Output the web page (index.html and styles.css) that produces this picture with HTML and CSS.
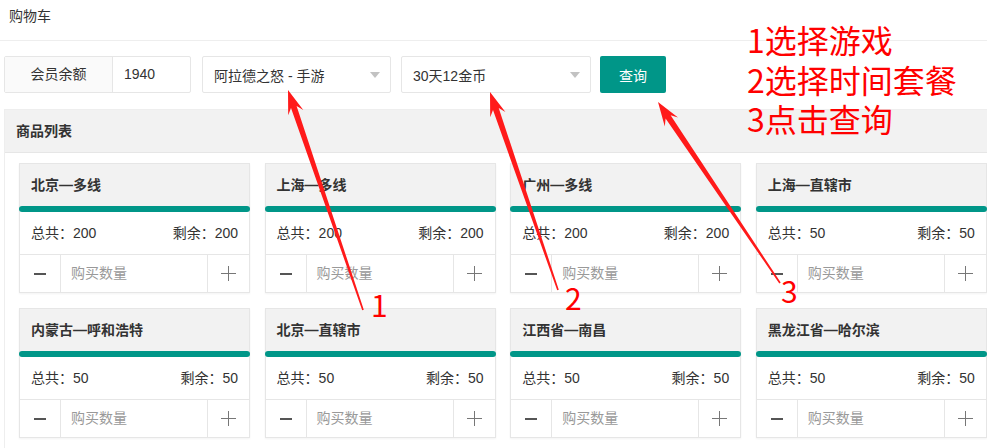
FILE: index.html
```html
<!DOCTYPE html>
<html lang="zh-CN">
<head>
    <meta charset="UTF-8">
    <meta name="viewport" content="width=device-width, initial-scale=1.0">
    <title>购物车</title>
    <link rel="stylesheet" href="styles.css">
</head>
<body>

<div class="page-title">购物车</div>

<div class="toolbar">
    <div class="balance">
        <span class="balance-label">会员余额</span>
        <span class="balance-value">1940</span>
    </div>
    <div class="select select-game">
        <span>阿拉德之怒 - 手游</span>
        <i class="caret"></i>
    </div>
    <div class="select select-plan">
        <span>30天12金币</span>
        <i class="caret"></i>
    </div>
    <button class="btn-query">查询</button>
</div>

<div class="panel">
    <div class="panel-header">商品列表</div>
    <div class="panel-body">
        <div class="card-grid">

            <div class="card">
                <div class="card-header">北京—多线</div>
                <div class="card-bar"></div>
                <div class="card-body"><span>总共：200</span><span>剩余：200</span></div>
                <div class="qty">
                    <span class="qty-btn"><i class="minus"></i></span>
                    <span class="qty-input">购买数量</span>
                    <span class="qty-btn plus-btn"><i class="plus"></i></span>
                </div>
            </div>

            <div class="card">
                <div class="card-header">上海—多线</div>
                <div class="card-bar"></div>
                <div class="card-body"><span>总共：200</span><span>剩余：200</span></div>
                <div class="qty">
                    <span class="qty-btn"><i class="minus"></i></span>
                    <span class="qty-input">购买数量</span>
                    <span class="qty-btn plus-btn"><i class="plus"></i></span>
                </div>
            </div>

            <div class="card">
                <div class="card-header">广州—多线</div>
                <div class="card-bar"></div>
                <div class="card-body"><span>总共：200</span><span>剩余：200</span></div>
                <div class="qty">
                    <span class="qty-btn"><i class="minus"></i></span>
                    <span class="qty-input">购买数量</span>
                    <span class="qty-btn plus-btn"><i class="plus"></i></span>
                </div>
            </div>

            <div class="card">
                <div class="card-header">上海—直辖市</div>
                <div class="card-bar"></div>
                <div class="card-body"><span>总共：50</span><span>剩余：50</span></div>
                <div class="qty">
                    <span class="qty-btn"><i class="minus"></i></span>
                    <span class="qty-input">购买数量</span>
                    <span class="qty-btn plus-btn"><i class="plus"></i></span>
                </div>
            </div>

            <div class="card">
                <div class="card-header">内蒙古—呼和浩特</div>
                <div class="card-bar"></div>
                <div class="card-body"><span>总共：50</span><span>剩余：50</span></div>
                <div class="qty">
                    <span class="qty-btn"><i class="minus"></i></span>
                    <span class="qty-input">购买数量</span>
                    <span class="qty-btn plus-btn"><i class="plus"></i></span>
                </div>
            </div>

            <div class="card">
                <div class="card-header">北京—直辖市</div>
                <div class="card-bar"></div>
                <div class="card-body"><span>总共：50</span><span>剩余：50</span></div>
                <div class="qty">
                    <span class="qty-btn"><i class="minus"></i></span>
                    <span class="qty-input">购买数量</span>
                    <span class="qty-btn plus-btn"><i class="plus"></i></span>
                </div>
            </div>

            <div class="card">
                <div class="card-header">江西省—南昌</div>
                <div class="card-bar"></div>
                <div class="card-body"><span>总共：50</span><span>剩余：50</span></div>
                <div class="qty">
                    <span class="qty-btn"><i class="minus"></i></span>
                    <span class="qty-input">购买数量</span>
                    <span class="qty-btn plus-btn"><i class="plus"></i></span>
                </div>
            </div>

            <div class="card">
                <div class="card-header">黑龙江省—哈尔滨</div>
                <div class="card-bar"></div>
                <div class="card-body"><span>总共：50</span><span>剩余：50</span></div>
                <div class="qty">
                    <span class="qty-btn"><i class="minus"></i></span>
                    <span class="qty-input">购买数量</span>
                    <span class="qty-btn plus-btn"><i class="plus"></i></span>
                </div>
            </div>

        </div>
    </div>
</div>

<!-- 标注：步骤说明和箭头 -->
<div class="note-steps">
    <p>1选择游戏</p>
    <p>2选择时间套餐</p>
    <p>3点击查询</p>
</div>

<svg class="note-arrows" width="987" height="448" viewBox="0 0 987 448">
    <polygon points="288,90 303.3,110.1 296.6,106.1 363.8,309.7 362.2,310.3 291,108 288.2,115.3"/>
    <polygon points="490,92 505.4,112.1 498.7,108 558.8,289.7 557.2,290.3 493,110 490.2,117.3"/>
    <polygon points="658,102 678,117.4 670.6,115.2 780.7,282.6 779.3,283.4 665.6,118.6 664.8,126.4"/>
</svg>
<span class="note-num num-1">1</span>
<span class="note-num num-2">2</span>
<span class="note-num num-3">3</span>

</body>
</html>
```

FILE: styles.css
```css
html, body {
    overflow: hidden;
}

body {
    margin: 0;
    padding: 0;
    position: relative;
    font-family: "Liberation Sans", "Noto Sans CJK SC", sans-serif;
    font-size: 14px;
    color: #333;
    background-color: #fff;
}

.page-title {
    height: 40px;
    line-height: 32px;
    padding-left: 9px;
    border-bottom: 1px solid #eee;
}

/* верхняя панель с фильтрами */
.toolbar {
    display: flex;
    align-items: stretch;
    height: 37px;
    padding: 15px 0 0 4px;
    margin-bottom: 16px;
}

.balance {
    display: flex;
    width: 187px;
    border: 1px solid #e6e6e6;
    border-radius: 2px;
    box-sizing: border-box;
    margin-right: 11px;
}

.balance-label {
    width: 107px;
    text-align: center;
    line-height: 35px;
    background-color: #fafafa;
    border-right: 1px solid #e6e6e6;
}

.balance-value {
    padding-left: 11px;
    line-height: 35px;
}

.select {
    display: flex;
    align-items: center;
    padding: 0 10px 0 11px;
    border: 1px solid #e6e6e6;
    border-radius: 2px;
    box-sizing: border-box;
}

.select span {
    flex-grow: 1;
}

.select-game {
    width: 189px;
    margin-right: 10px;
}

.select-plan {
    width: 190px;
    margin-right: 9px;
}

.caret {
    width: 0;
    height: 0;
    border-top: 6px solid #c2c2c2;
    border-left: 5px solid transparent;
    border-right: 5px solid transparent;
}

.btn-query {
    width: 66px;
    padding: 0;
    border: none;
    border-radius: 2px;
    background-color: #009688;
    color: #fff;
    font-family: inherit;
    font-size: 14px;
}

/* список товаров */
.panel {
    width: 1000px;
    margin-left: 4px;
    border: 1px solid #eee;
}

.panel-header {
    height: 42px;
    line-height: 42px;
    padding-left: 11px;
    background-color: #f2f2f2;
    border-bottom: 1px solid #e6e6e6;
    font-weight: bold;
}

.panel-body {
    padding: 10px 14px;
}

.card-grid {
    display: grid;
    grid-template-columns: repeat(4, 231px);
    column-gap: 14.6px;
    row-gap: 15px;
}

.card {
    border: 1px solid #e6e6e6;
    box-shadow: 0 1px 2px rgba(0, 0, 0, 0.05);
}

.card-header {
    height: 42px;
    line-height: 42px;
    padding: 0 11px;
    background-color: #f2f2f2;
    font-weight: bold;
}

.card-bar {
    height: 6px;
    margin: 0 -1px;
    border-radius: 3px;
    background-color: #009688;
}

.card-body {
    display: flex;
    justify-content: space-between;
    height: 42px;
    line-height: 42px;
    padding: 0 11px;
    border-bottom: 1px solid #e6e6e6;
}

.qty {
    display: flex;
    height: 37px;
}

.qty-btn {
    display: flex;
    align-items: center;
    justify-content: center;
    width: 40px;
    border-right: 1px solid #e6e6e6;
}

.qty-btn.plus-btn {
    width: 41px;
    border-right: none;
    border-left: 1px solid #e6e6e6;
}

.qty-input {
    flex-grow: 1;
    padding-left: 10px;
    line-height: 37px;
    color: #999;
}

.minus {
    width: 12px;
    height: 2px;
    background-color: #555;
}

.plus {
    position: relative;
    width: 15px;
    height: 15px;
}

.plus::before,
.plus::after {
    content: "";
    position: absolute;
    background-color: #777;
}

.plus::before {
    left: 0;
    top: 7px;
    width: 15px;
    height: 1px;
}

.plus::after {
    left: 7px;
    top: 0;
    width: 1px;
    height: 15px;
}

/* красные пометки поверх страницы */
.note-steps {
    position: absolute;
    left: 747px;
    top: 20px;
    color: #ff0000;
    font-family: "Noto Sans CJK SC", sans-serif;
    font-size: 32px;
    line-height: 39.5px;
}

.note-steps p {
    margin: 0;
}

.note-arrows {
    position: absolute;
    left: 0;
    top: 0;
    pointer-events: none;
}

.note-arrows polygon {
    fill: #ff1a1a;
}

.note-num {
    position: absolute;
    color: #ff0000;
    font-family: "Noto Sans CJK SC", sans-serif;
    font-size: 30px;
    line-height: 30px;
}

.num-1 {
    left: 371px;
    top: 289px;
}

.num-2 {
    left: 565px;
    top: 282px;
}

.num-3 {
    left: 781px;
    top: 275px;
}
```
